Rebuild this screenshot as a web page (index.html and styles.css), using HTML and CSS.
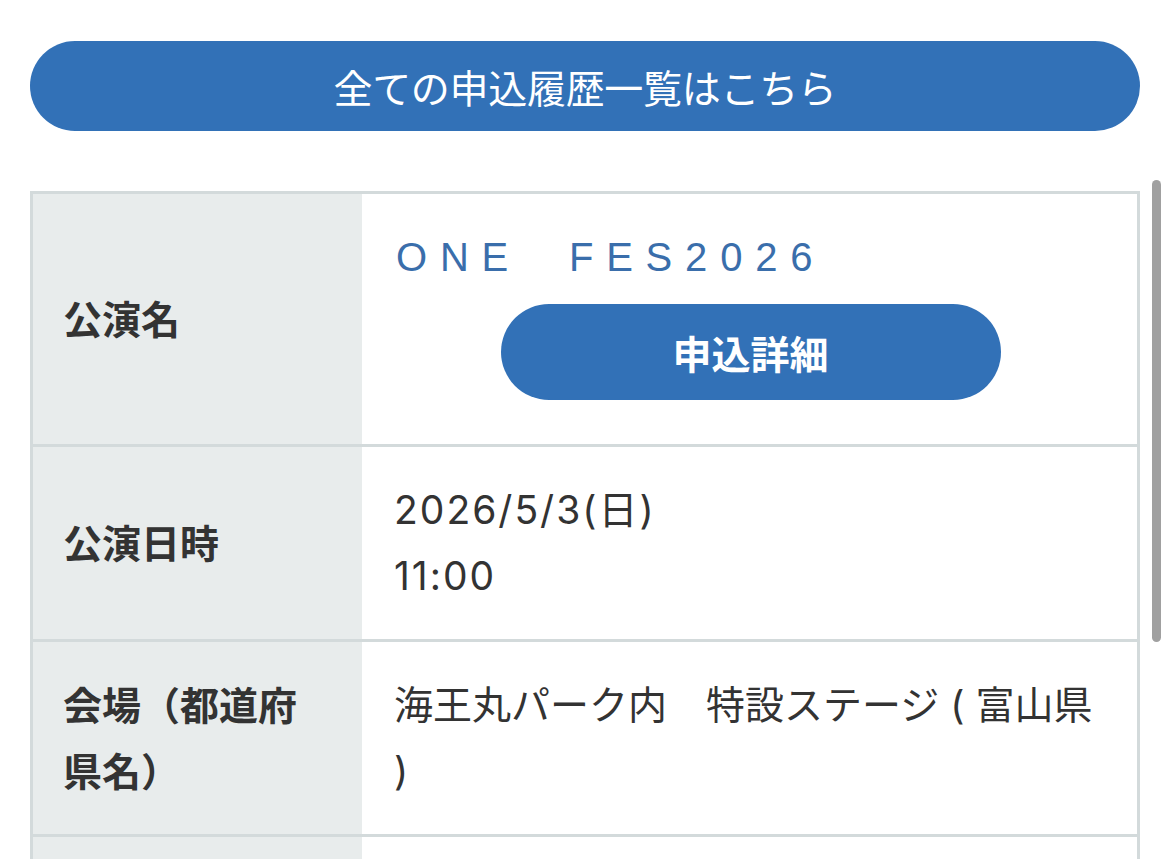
FILE: index.html
```html
<!DOCTYPE html>
<html lang="ja">
<head>
<meta charset="utf-8">
<title>申込履歴</title>
<link rel="stylesheet" href="styles.css">
</head>
<body>
<main class="page">
  <a class="history-btn" href="#">全ての申込履歴一覧はこちら</a>

  <section class="info">
    <div class="label">公演名</div>
    <div class="value value-title">
      <div class="event-name">ONE&nbsp;&nbsp;FES2026</div>
      <a class="detail-btn" href="#">申込詳細</a>
    </div>

    <div class="label">公演日時</div>
    <div class="value datetime">2026/5/3(日)<br>11:00</div>

    <div class="label">会場（都道府県名）</div>
    <div class="value">海王丸パーク内　特設ステージ ( 富山県 )</div>

    <div class="label label-empty"></div>
    <div class="value value-empty"></div>
  </section>
</main>
<div class="scroll-thumb"></div>
</body>
</html>
```

FILE: styles.css
```css
html, body {
  margin: 0;
  padding: 0;
  background: #ffffff;
  overflow: hidden;
  height: 859px;
}

body {
  font-family: "Noto Sans CJK JP", "Noto Sans", sans-serif;
  color: #333333;
}

.page {
  padding: 41px 30px 0;
}

.history-btn {
  display: flex;
  align-items: center;
  justify-content: center;
  height: 90px;
  border-radius: 45px;
  background: #3271b7;
  color: #ffffff;
  font-size: 39px;
  font-weight: 400;
  text-decoration: none;
  letter-spacing: -0.3px;
}

.info {
  margin-top: 60px;
  display: grid;
  grid-template-columns: 329px 1fr;
  border: 3px solid #d3dadb;
  border-bottom: none;
}

.label {
  display: flex;
  align-items: center;
  background: #e8ecec;
  padding: 28px 28px 32px 30px;
  font-size: 39px;
  font-weight: 700;
  line-height: 66px;
  color: #333333;
  border-bottom: 3px solid #d3dadb;
}

.value {
  padding: 30px 40px 30px 32px;
  font-family: "Inter", "Noto Sans CJK JP", sans-serif;
  font-size: 39px;
  line-height: 66px;
  color: #333333;
  border-bottom: 3px solid #d3dadb;
  background: #ffffff;
}

.datetime {
  letter-spacing: 2px;
}

.value-title {
  display: flex;
  flex-direction: column;
  padding-right: 30px;
}

.event-name {
  font-family: "Liberation Sans", "Noto Sans CJK JP", sans-serif;
  font-size: 40px;
  letter-spacing: 12.8px;
  color: #3a6eab;
  line-height: 66px;
  padding-left: 2px;
}

.detail-btn {
  align-self: center;
  margin: 14px 0 14px;
  width: 500px;
  height: 96px;
  border-radius: 48px;
  background: #3271b7;
  color: #ffffff;
  font-family: "Noto Sans CJK JP", sans-serif;
  font-size: 39px;
  font-weight: 700;
  text-decoration: none;
  display: flex;
  align-items: center;
  justify-content: center;
}

.label-empty,
.value-empty {
  height: 130px;
}

.scroll-thumb {
  position: fixed;
  top: 180px;
  left: 1152px;
  width: 9px;
  height: 462px;
  border-radius: 5px;
  background: #a0a0a0;
}
```
